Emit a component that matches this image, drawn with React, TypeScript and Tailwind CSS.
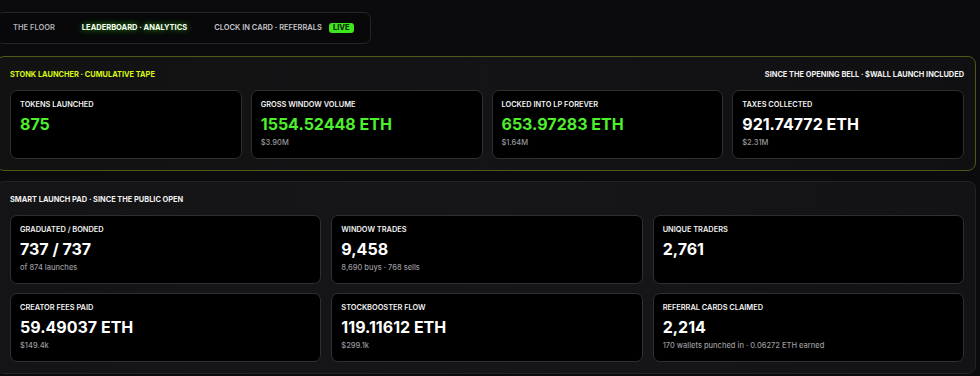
import React from 'react';

interface Stat {
  label: string;
  value: string;
  sub?: string;
  green?: boolean;
}

const tape: Stat[] = [
  { label: 'Tokens Launched', value: '875', green: true },
  { label: 'Gross Window Volume', value: '1554.52448 ETH', sub: '$3.90M', green: true },
  { label: 'Locked Into LP Forever', value: '653.97283 ETH', sub: '$1.64M', green: true },
  { label: 'Taxes Collected', value: '921.74772 ETH', sub: '$2.31M' },
];

const pad: Stat[] = [
  { label: 'Graduated / Bonded', value: '737 / 737', sub: 'of 874 launches' },
  { label: 'Window Trades', value: '9,458', sub: '8,690 buys · 768 sells' },
  { label: 'Unique Traders', value: '2,761' },
  { label: 'Creator Fees Paid', value: '59.49037 ETH', sub: '$149.4k' },
  { label: 'StockBooster Flow', value: '119.11612 ETH', sub: '$299.1k' },
  { label: 'Referral Cards Claimed', value: '2,214', sub: '170 wallets punched in · 0.06272 ETH earned' },
];

const StatCard: React.FC<{ stat: Stat }> = ({ stat }) => (
  <div className="h-[69px] rounded-[7px] border border-[#2f2f33] bg-black px-[9px] pt-[9px]">
    <div className="text-[7.4px] font-semibold uppercase leading-[10px] text-[#f2f2f2]">
      {stat.label}
    </div>
    <div
      className={
        'mt-[4px] text-[16px] font-bold leading-[20px] ' +
        (stat.green ? 'text-[#4eef2c]' : 'text-white')
      }
    >
      {stat.value}
    </div>
    {stat.sub && (
      <div className="mt-[4px] text-[7.5px] font-medium leading-[10px] text-[#9a9a9e]">{stat.sub}</div>
    )}
  </div>
);

export default function App() {
  return (
    <div className="min-h-[376px] w-[980px] overflow-hidden bg-[#0b0b0d] pr-1 pt-[12px] font-['Inter','Noto_Sans',sans-serif]">
      <nav className="-ml-[4px] inline-flex h-[32px] items-center rounded-[7px] border border-[#24242a] bg-[#08080a] px-[2px]">
        <span className="px-[14px] text-[7.5px] font-semibold uppercase text-[#b4b4b8]">The Floor</span>
        <span className="px-[13px] text-[7.5px] font-bold uppercase text-[#f4fff0] [text-shadow:0_0_6px_rgba(80,240,40,0.75)]">
          Leaderboard · Analytics
        </span>
        <span className="flex items-center gap-[7px] px-[14px] text-[7.5px] font-semibold uppercase text-[#c4c4c8]">
          Clock In Card · Referrals
          <span className="rounded-[3px] bg-[#3ee61c] px-[4px] py-[1px] text-[7.5px] font-extrabold leading-[8px] text-[#0a2a05]">
            Live
          </span>
        </span>
      </nav>

      <section className="-ml-[4px] mt-[12px] rounded-[8px] border border-[#4f5816] bg-gradient-to-r from-[#121213] via-[#141416] to-[#101012] pb-[11px] pl-[13px] pr-[11px] pt-[12px]">
        <div className="flex h-[12px] items-center justify-between text-[7.4px] font-bold uppercase">
          <span className="text-[#d6f814]">Stonk Launcher · Cumulative Tape</span>
          <span className="text-[#f0f0f0]">Since the Opening Bell · $WALL Launch Included</span>
        </div>
        <div className="mt-[9px] grid grid-cols-4 gap-[9px]">
          {tape.map((s) => (
            <StatCard key={s.label} stat={s} />
          ))}
        </div>
      </section>

      <section className="-ml-[4px] mt-[10px] rounded-[8px] border border-[#232327] bg-gradient-to-r from-[#141416] via-[#161618] to-[#131315] pb-[11px] pl-[13px] pr-[11px] pt-[12px]">
        <div className="flex h-[12px] items-center text-[7.4px] font-bold uppercase text-[#f0f0f0]">
          Smart Launch Pad · Since the Public Open
        </div>
        <div className="mt-[9px] grid grid-cols-3 gap-x-[10px] gap-y-[9px]">
          {pad.map((s) => (
            <StatCard key={s.label} stat={s} />
          ))}
        </div>
      </section>
    </div>
  );
}
